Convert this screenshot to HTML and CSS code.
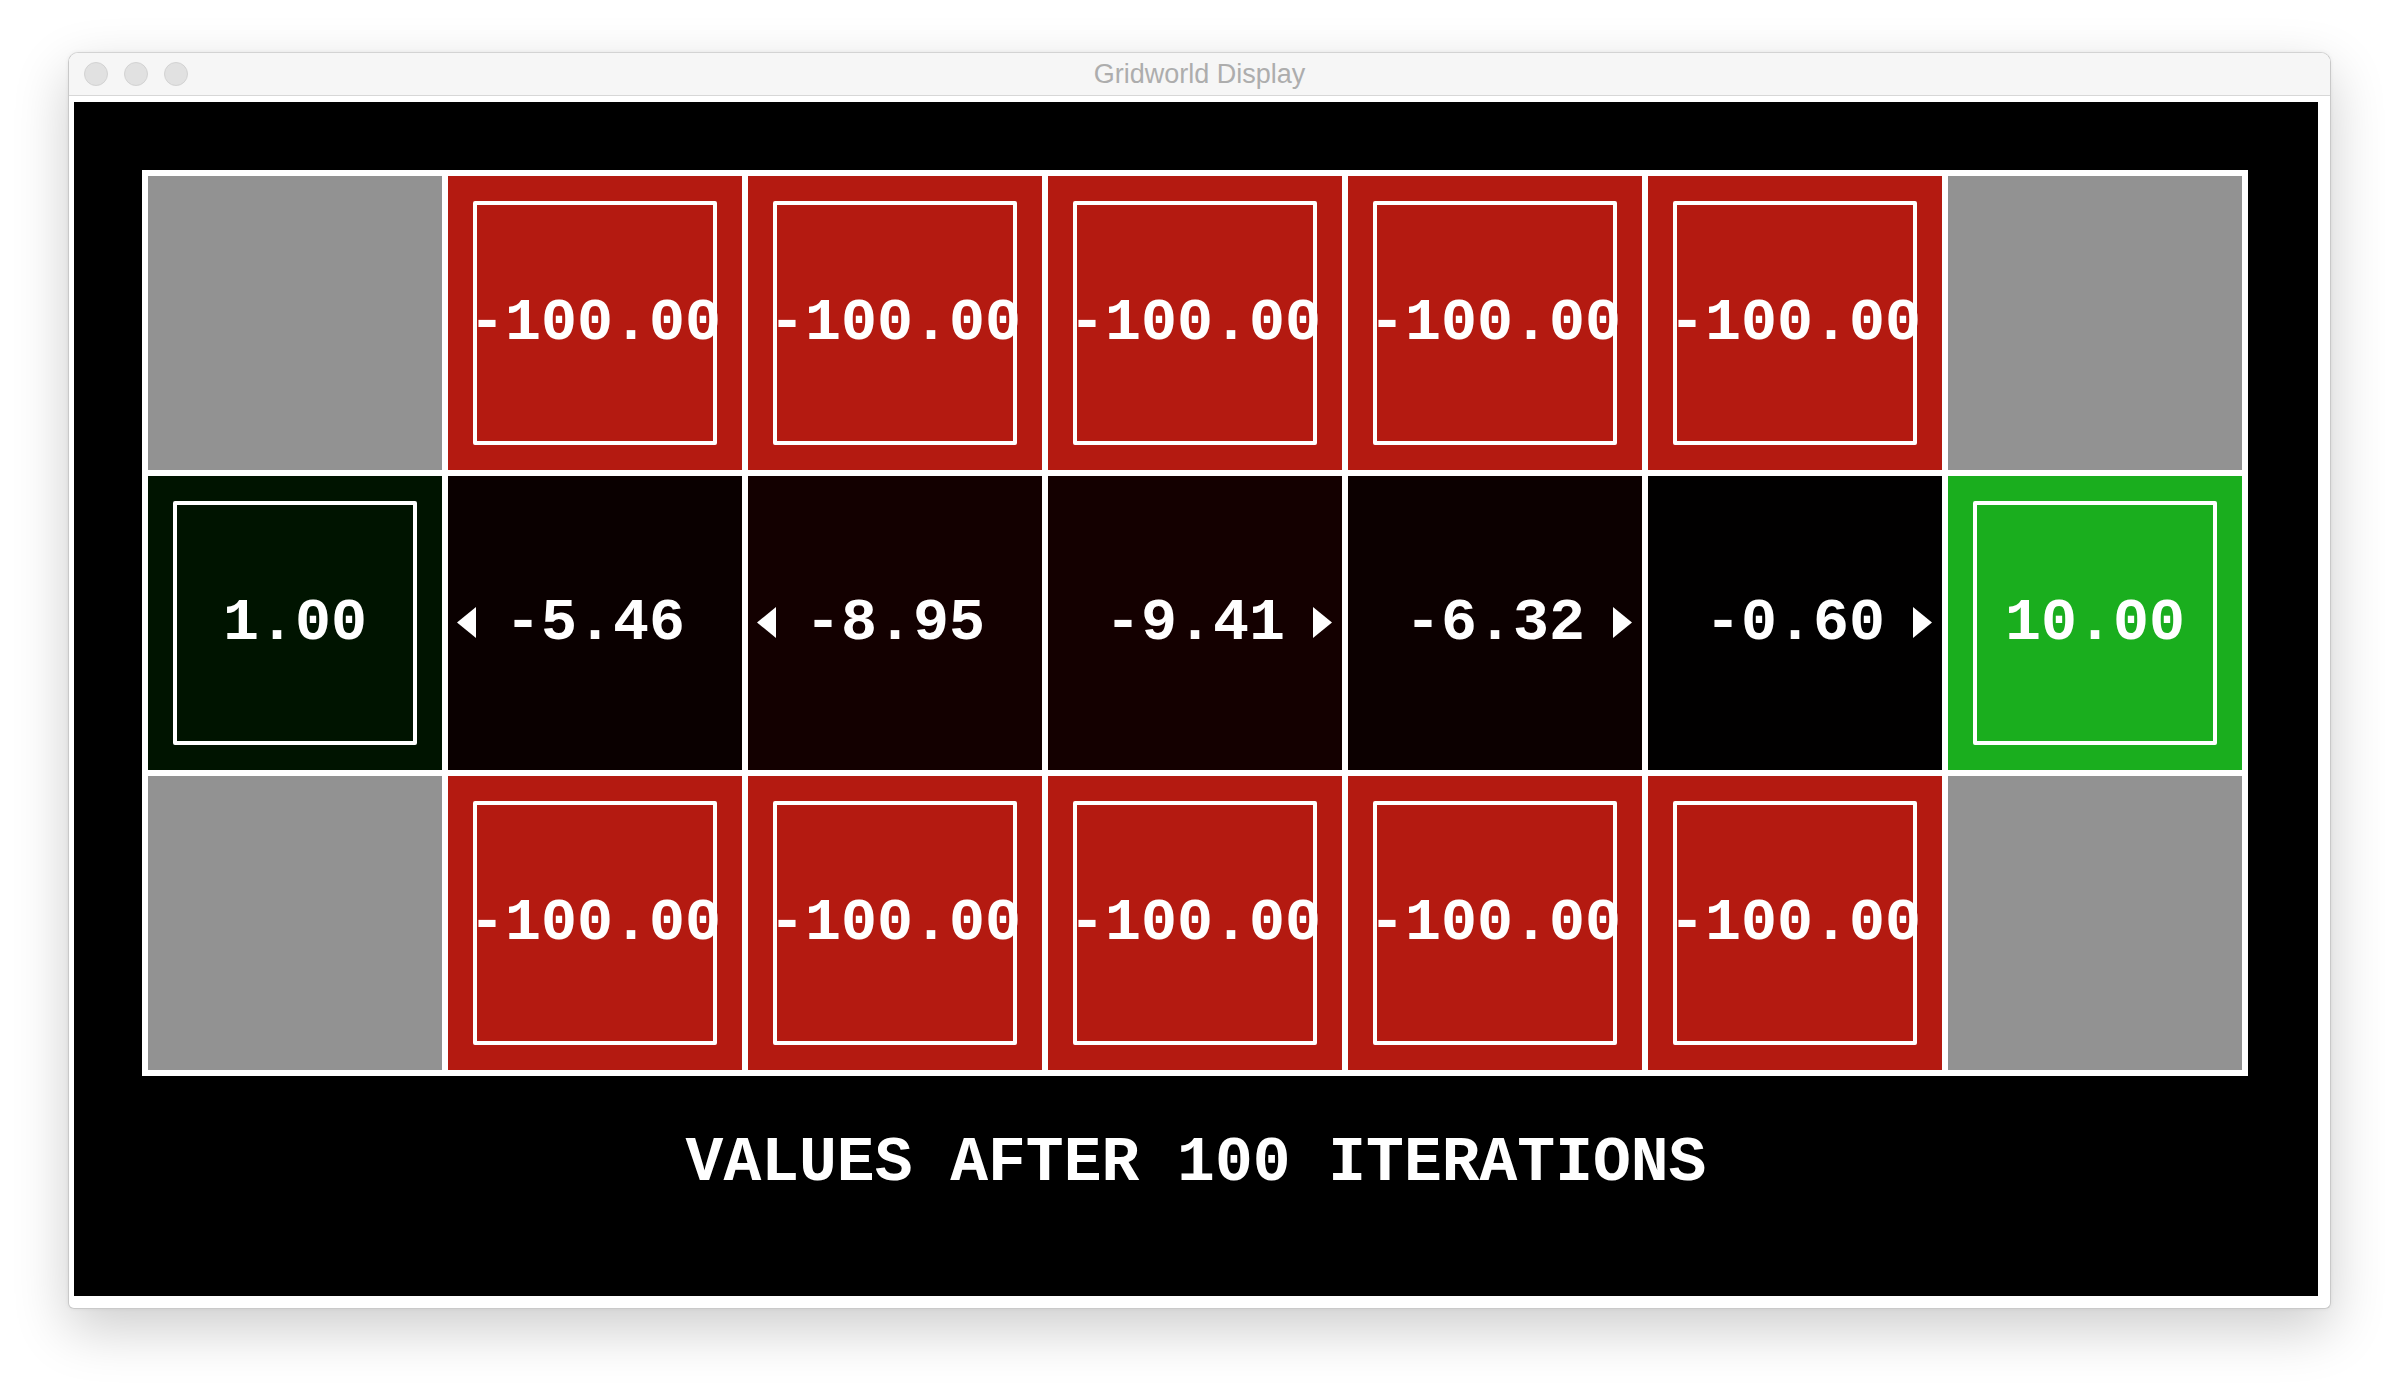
FILE: index.html
```html
<!DOCTYPE html>
<html>
<head>
<meta charset="utf-8">
<title>Gridworld Display</title>
<link rel="stylesheet" href="styles.css">
</head>
<body>
<div class="window">
  <div class="titlebar">
    <div class="lights"><span class="light"></span><span class="light"></span><span class="light"></span></div>
    <div class="title">Gridworld Display</div>
    <div class="spacer"></div>
  </div>
  <div class="content">
    <div class="canvas">
      <div class="grid">
        <div class="cell wall"></div>
        <div class="cell pit"><div class="box"><span class="val">-100.00</span></div></div>
        <div class="cell pit"><div class="box"><span class="val">-100.00</span></div></div>
        <div class="cell pit"><div class="box"><span class="val">-100.00</span></div></div>
        <div class="cell pit"><div class="box"><span class="val">-100.00</span></div></div>
        <div class="cell pit"><div class="box"><span class="val">-100.00</span></div></div>
        <div class="cell wall"></div>

        <div class="cell start"><div class="box"><span class="val">1.00</span></div></div>
        <div class="cell v546"><svg class="arrow arrow-w" viewBox="0 0 19 31"><polygon points="0,15.5 19,0 19,31"/></svg><span class="val">-5.46</span></div>
        <div class="cell v895"><svg class="arrow arrow-w" viewBox="0 0 19 31"><polygon points="0,15.5 19,0 19,31"/></svg><span class="val">-8.95</span></div>
        <div class="cell v941"><span class="val">-9.41</span><svg class="arrow arrow-e" viewBox="0 0 19 31"><polygon points="19,15.5 0,0 0,31"/></svg></div>
        <div class="cell v632"><span class="val">-6.32</span><svg class="arrow arrow-e" viewBox="0 0 19 31"><polygon points="19,15.5 0,0 0,31"/></svg></div>
        <div class="cell v060"><span class="val">-0.60</span><svg class="arrow arrow-e" viewBox="0 0 19 31"><polygon points="19,15.5 0,0 0,31"/></svg></div>
        <div class="cell goal"><div class="box"><span class="val">10.00</span></div></div>

        <div class="cell wall"></div>
        <div class="cell pit"><div class="box"><span class="val">-100.00</span></div></div>
        <div class="cell pit"><div class="box"><span class="val">-100.00</span></div></div>
        <div class="cell pit"><div class="box"><span class="val">-100.00</span></div></div>
        <div class="cell pit"><div class="box"><span class="val">-100.00</span></div></div>
        <div class="cell pit"><div class="box"><span class="val">-100.00</span></div></div>
        <div class="cell wall"></div>
      </div>
      <div class="caption">VALUES AFTER 100 ITERATIONS</div>
    </div>
  </div>
</div>
</body>
</html>
```

FILE: styles.css
```css
html, body {
  margin: 0;
  padding: 0;
  background: #ffffff;
}

body {
  width: 2398px;
  height: 1392px;
  overflow: hidden;
}

.window {
  box-sizing: border-box;
  margin: 52px 0 0 68px;
  width: 2263px;
  height: 1257px;
  border: 1px solid #c9c9c9;
  border-top-color: #d3d3d3;
  border-radius: 10px 10px 6px 6px;
  background: #ffffff;
  box-shadow: 0 20px 55px rgba(0, 0, 0, 0.20), 0 0 4px rgba(0, 0, 0, 0.06);
  overflow: hidden;
}

.titlebar {
  height: 42px;
  background: #f6f6f6;
  border-bottom: 1px solid #d7d7d7;
  display: grid;
  grid-template-columns: 1fr auto 1fr;
  align-items: center;
}

.lights {
  display: flex;
  gap: 16px;
  padding-left: 15px;
}

.light {
  box-sizing: border-box;
  width: 24px;
  height: 24px;
  border-radius: 50%;
  background: #e1e1e1;
  border: 1px solid #d2d2d2;
}

.title {
  font-family: "Liberation Sans", Arial, sans-serif;
  font-size: 27px;
  color: #adadad;
  line-height: 42px;
}

.content {
  padding: 6px 12px 12px 5px;
}

.canvas {
  width: 2244px;
  height: 1194px;
  background: #000000;
  box-sizing: border-box;
  padding-top: 68px;
}

.grid {
  margin-left: 68px;
  width: 2106px;
  box-sizing: border-box;
  display: grid;
  grid-template-columns: repeat(7, 294px);
  grid-template-rows: repeat(3, 294px);
  gap: 6px;
  padding: 6px;
  background: #ffffff;
}

.cell {
  position: relative;
  display: flex;
  align-items: center;
  justify-content: center;
}

.wall { background: #929292; }
.pit { background: #b41a11; }
.start { background: #001400; }
.goal { background: #1aae1e; }
.v546 { background: #0a0000; }
.v895 { background: #130000; }
.v941 { background: #140000; }
.v632 { background: #0c0000; }
.v060 { background: #010000; }

.box {
  box-sizing: border-box;
  width: 244px;
  height: 244px;
  border: 4px solid #ffffff;
  border-radius: 2px;
  display: flex;
  align-items: center;
  justify-content: center;
}

.val {
  font-family: "Liberation Mono", "DejaVu Sans Mono", monospace;
  font-weight: bold;
  font-size: 60px;
  color: #ffffff;
  white-space: nowrap;
}

.arrow {
  position: absolute;
  top: 131px;
  width: 19px;
  height: 31px;
  fill: #ffffff;
}

.arrow-w { left: 9px; }
.arrow-e { left: 265px; }

.caption {
  margin-top: 56px;
  text-align: center;
  font-family: "Liberation Mono", "DejaVu Sans Mono", monospace;
  font-weight: bold;
  font-size: 63px;
  line-height: 64px;
  color: #ffffff;
  white-space: nowrap;
}
```
